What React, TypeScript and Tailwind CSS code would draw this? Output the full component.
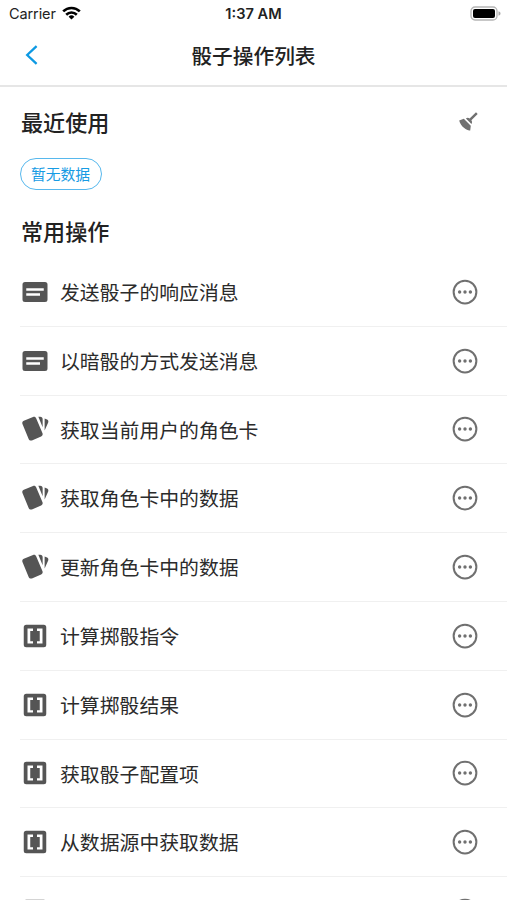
import React from 'react';

type IconName = 'message' | 'cards' | 'brackets';

interface Operation {
  icon: IconName;
  title: string;
}

const operations: Operation[] = [
  { icon: 'message', title: '发送骰子的响应消息' },
  { icon: 'message', title: '以暗骰的方式发送消息' },
  { icon: 'cards', title: '获取当前用户的角色卡' },
  { icon: 'cards', title: '获取角色卡中的数据' },
  { icon: 'cards', title: '更新角色卡中的数据' },
  { icon: 'brackets', title: '计算掷骰指令' },
  { icon: 'brackets', title: '计算掷骰结果' },
  { icon: 'brackets', title: '获取骰子配置项' },
  { icon: 'brackets', title: '从数据源中获取数据' },
  { icon: 'brackets', title: '' },
];

const iconPaths: Record<IconName, string> = {
  message:
    'M20 4H4a2 2 0 0 0-2 2v12a2 2 0 0 0 2 2h16a2 2 0 0 0 2-2V6a2 2 0 0 0-2-2M5 9h14v2H5zM5 13h11v2H5z',
  cards:
    'M21.2 4.25l-1.5-.6v9.6l2.86-6.43c.41-1.02-.06-2.19-1.36-2.57M1.97 8.05L6.93 20c.31.77 1.04 1.24 1.81 1.26.26 0 .53-.05.79-.16l7.37-3.05c.75-.31 1.21-1.05 1.23-1.79.01-.26-.04-.55-.13-.81L13 3.5c-.29-.77-1.03-1.24-1.81-1.25-.26 0-.52.06-.77.15L3.06 5.45c-1.02.42-1.51 1.59-1.09 2.6M18.12 4.25a2 2 0 0 0-2-2h-1.45l3.45 8.34',
  brackets:
    'M5 3h14a2 2 0 0 1 2 2v14a2 2 0 0 1-2 2H5a2 2 0 0 1-2-2V5a2 2 0 0 1 2-2M6 6v12h4.4v-1.9H8.2V7.9h2.2V6zM13.6 6v1.9h2.2v8.2h-2.2V18H18V6z',
};

function StatusBar() {
  return (
    <div className="grid h-7 shrink-0 grid-cols-[1fr_auto_1fr] items-center pl-[9px] pr-[6px] font-['Inter','Liberation_Sans',sans-serif] text-[14.5px] leading-none text-[#222]">
      <div className="flex items-center gap-[6px]">
        <span className="tracking-[-0.1px]">Carrier</span>
        <svg className="mb-[2px] h-[14px] w-[19px]" viewBox="0 0 19 14" fill="none" stroke="#000" strokeWidth="2.6">
          <path d="M1.2 5.4a11.8 11.8 0 0 1 16.6 0" />
          <path d="M4.2 8.7a7.6 7.6 0 0 1 10.6 0" />
          <path d="M9.5 13.6L6.6 10.7a4.1 4.1 0 0 1 5.8 0z" fill="#000" stroke="none" />
        </svg>
      </div>
      <span className="pr-[3px] text-center text-[14.6px] font-semibold">1:37 AM</span>
      <svg className="mb-[1px] h-[15px] w-[31px] justify-self-end" viewBox="0 0 31 15">
        <rect x="1" y="1" width="26" height="13" rx="4" fill="#fff" stroke="#b5b5b5" strokeWidth="1.3" />
        <rect x="3" y="3" width="22" height="9" rx="2" fill="#000" />
        <path d="M28.5 5.3v4.4c1.6-.6 2-1.2 2-2.2s-.4-1.6-2-2.2" fill="#aaa" />
      </svg>
    </div>
  );
}

function NavBar() {
  return (
    <div className="grid h-[59px] shrink-0 grid-cols-[1fr_auto_1fr] items-center border-b-2 border-[#e6e6e6] pb-[3px]">
      <button className="ml-[25px] w-fit">
        <svg className="h-5 w-[14px]" viewBox="0 0 14 20" fill="none" stroke="#0d99e3" strokeWidth="2.3">
          <path d="M11.6 1.2L2.2 10l9.4 8.8" />
        </svg>
      </button>
      <h1 className="text-[20.7px] font-medium leading-none text-[#222]">骰子操作列表</h1>
    </div>
  );
}

function OperationRow({ icon, title }: Operation) {
  return (
    <li className="ml-5 flex h-[68.8px] shrink-0 items-center border-b border-[#f0f0f0] pr-[27px]">
      <svg className="h-[30px] w-[30px] shrink-0" viewBox="0 0 24 24" fill="#555" fillRule="evenodd">
        <path d={iconPaths[icon]} />
      </svg>
      <span className="ml-[10px] flex-1 text-[19.85px] leading-none text-[#2b2b2b]">{title}</span>
      <button>
        <svg className="h-[30px] w-[30px]" viewBox="0 0 24 24" fill="#707070">
          <circle cx="12" cy="12" r="9.1" fill="none" stroke="#707070" strokeWidth="1.6" />
          <circle cx="7.7" cy="12" r="1.35" />
          <circle cx="12" cy="12" r="1.35" />
          <circle cx="16.3" cy="12" r="1.35" />
        </svg>
      </button>
    </li>
  );
}

function App() {
  return (
    <div className="flex h-[900px] flex-col overflow-hidden bg-white font-['Noto_Sans_CJK_SC',sans-serif]">
      <StatusBar />
      <NavBar />
      <main className="flex min-h-0 flex-1 flex-col overflow-hidden">
        <div className="flex h-[71px] shrink-0 items-center justify-between pb-[2px] pl-[21px] pr-[26px]">
          <h2 className="text-[22.1px] font-medium leading-none text-[#222]">最近使用</h2>
          <button>
            <svg className="h-[25px] w-[25px]" viewBox="0 0 25 25" fill="#707070">
              <path d="M3.2 11.6l4.6-1.9 7 7-.6 4.7c-2 .2-4-.8-6-2.3-2.600-1.900-4.400-4.700-5-7.500z" />
              <path d="M9.900 9.500c1.200-1.200 2.600-.9 3.700-.1l6.400-6.200 1.700 1.700-6.300 6.300c.8 1.200.9 2.400 0 3.700z" />
            </svg>
          </button>
        </div>
        <div className="ml-5 flex h-8 w-[82px] shrink-0 items-center justify-center self-start rounded-full border border-[#57b8ed] pr-[1px] text-[14.8px] leading-none text-[#169be4]">
          暂无数据
        </div>
        <h2 className="mt-[29px] h-[39px] shrink-0 pl-[21px] text-[22.1px] font-medium leading-[22px] text-[#222]">
          常用操作
        </h2>
        <ul className="flex flex-col">
          {operations.map((operation, index) => (
            <OperationRow key={index} {...operation} />
          ))}
        </ul>
      </main>
    </div>
  );
}

export default App;
